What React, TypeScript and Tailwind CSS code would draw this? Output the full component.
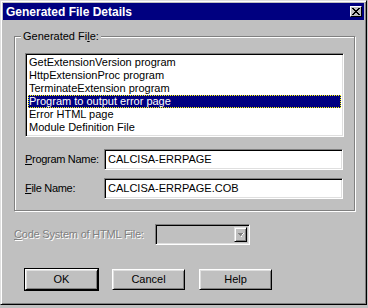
import React from 'react';

const items = [
  'GetExtensionVersion program',
  'HttpExtensionProc program',
  'TerminateExtension program',
  'Program to output error page',
  'Error HTML page',
  'Module Definition File',
];

const sunken =
  'border border-t-[#808080] border-l-[#808080] border-r-white border-b-white shadow-[inset_1px_1px_0_#000,inset_-1px_-1px_0_#dfdfdf]';

const Button: React.FC<{ label: string; isDefault?: boolean }> = ({ label, isDefault }) => (
  <div className={isDefault ? 'border border-black' : 'p-px'}>
    <div className="flex h-[21px] w-[73px] items-center justify-center border border-t-white border-l-white border-r-black border-b-black bg-[#c0c0c0] text-[11px] text-black shadow-[inset_1px_1px_0_#dfdfdf,inset_-1px_-1px_0_#808080]">
      {label}
    </div>
  </div>
);

const App: React.FC = () => {
  return (
    <div className="h-[308px] w-[368px] bg-[#c0c0c0] font-['Liberation_Sans',Arial,sans-serif]">
      <div className="flex h-[305px] w-[367px] flex-col border border-t-[#dfdfdf] border-l-[#dfdfdf] border-r-black border-b-black p-[2px] shadow-[inset_1px_1px_0_#fff,inset_-1px_-1px_0_#808080]">
        {/* Title bar */}
        <div className="flex h-[17px] items-center justify-between bg-[#000080] pl-[3px] pr-[2px]">
          <span className="text-[12px] font-bold leading-none text-white">Generated File Details</span>
          <div className="flex h-[11px] w-[12px] items-center justify-center border border-t-white border-l-white border-r-black border-b-black bg-[#c0c0c0]">
            <svg width="8" height="7" viewBox="0 0 8 7" shapeRendering="crispEdges">
              <path d="M0 0h2v1h-2zM6 0h2v1h-2zM1 1h2v1h-2zM5 1h2v1h-2zM2 2h4v1h-4zM3 3h2v1h-2zM2 4h4v1h-4zM1 5h2v1h-2zM5 5h2v1h-2zM0 6h2v1h-2zM6 6h2v1h-2z" fill="#000" />
            </svg>
          </div>
        </div>

        <div className="flex flex-col px-[11px] pt-[16px]">
          {/* Group box */}
          <div className="relative h-[175px] w-[341px] border border-[#808080] pl-[10px] pt-[16px] shadow-[1px_1px_0_#fff,inset_1px_1px_0_#fff]">
            <span className="absolute left-[6px] top-[-8px] bg-[#c0c0c0] px-[2px] text-[11px] leading-[14px] text-black">
              Generated Fi<span className="underline">l</span>e:
            </span>

            <div className={`h-[84px] w-[319px] bg-white p-[2px] ${sunken}`}>
              {items.map((it, i) => (
                <div
                  key={it}
                  className={
                    i === 3
                      ? 'h-[13px] border border-dotted border-[#ffff00] bg-[#000080] pl-0 text-[11px] leading-[11px] text-white'
                      : 'h-[13px] pl-[1px] text-[11px] leading-[13px] text-black'
                  }
                >
                  {it}
                </div>
              ))}
            </div>

            <div className="mt-[12px] flex items-center">
              <span className="w-[79px] text-[11px] tracking-[-0.3px] text-black">
                <span className="underline">P</span>rogram Name:
              </span>
              <div className={`flex h-[21px] w-[239px] items-center bg-white pl-[3px] text-[11px] text-black ${sunken}`}>
                CALCISA-ERRPAGE
              </div>
            </div>

            <div className="mt-[8px] flex items-center">
              <span className="w-[79px] text-[11px] tracking-[-0.3px] text-black">
                <span className="underline">F</span>ile Name:
              </span>
              <div className={`flex h-[21px] w-[239px] items-center bg-white pl-[3px] text-[11px] text-black ${sunken}`}>
                CALCISA-ERRPAGE.COB
              </div>
            </div>
          </div>

          {/* Code system row */}
          <div className="mt-[13px] flex items-center">
            <span className="w-[141px] text-[11px] tracking-[-0.2px] text-[#808080] [text-shadow:1px_1px_0_#fff]">
              <span className="underline">C</span>ode System of HTML File:
            </span>
            <div className={`flex h-[21px] w-[95px] items-stretch justify-end bg-[#c0c0c0] p-[2px] ${sunken}`}>
              <div className="flex w-[13px] items-center justify-center border border-t-[#dfdfdf] border-l-[#dfdfdf] border-r-black border-b-black shadow-[inset_1px_1px_0_#fff,inset_-1px_-1px_0_#808080]">
                <svg width="7" height="5" viewBox="0 0 7 5" shapeRendering="crispEdges">
                  <path d="M1 1h5v1h-5zM2 2h3v1h-3zM3 3h1v1h-1z" fill="#808080" />
                  <path d="M4 4h1v1h-1zM5 2h1v1h-1zM6 1h1v1h-1z" fill="#fff" />
                </svg>
              </div>
            </div>
          </div>

          {/* Buttons */}
          <div className="ml-[10px] mt-[23px] flex gap-[12px]">
            <Button label="OK" isDefault />
            <Button label="Cancel" />
            <Button label="Help" />
          </div>
        </div>
      </div>
    </div>
  );
};

export default App;
